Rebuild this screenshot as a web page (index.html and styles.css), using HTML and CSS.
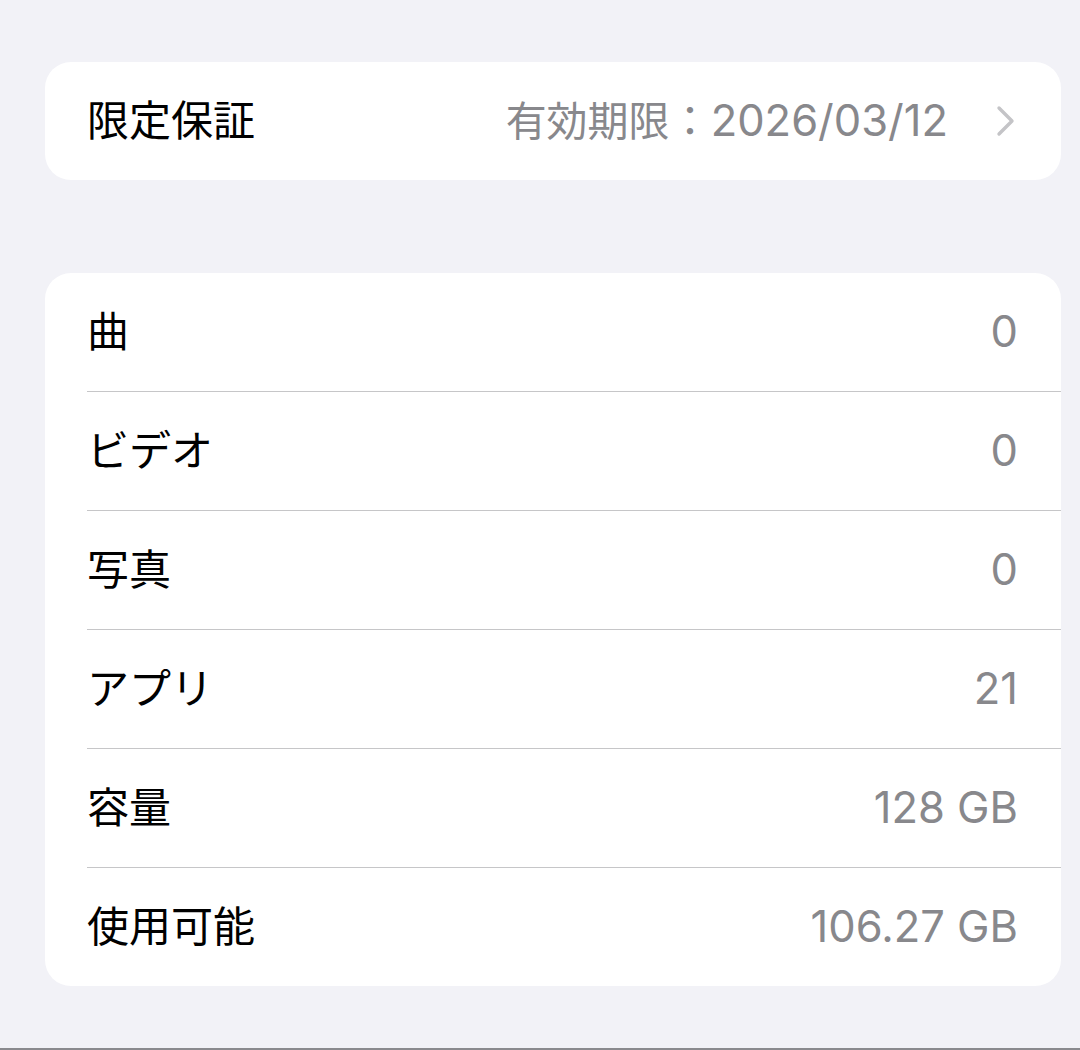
FILE: index.html
```html
<!DOCTYPE html>
<html lang="ja">
<head>
<meta charset="utf-8">
<link rel="stylesheet" href="styles.css">
</head>
<body>
<div class="page">
  <div class="card card-warranty">
    <div class="row">
      <span class="label">限定保証</span>
      <span class="value-wrap">
        <span class="value"><span class="cjk">有効期限：</span>2026/03/12</span>
        <svg class="chevron" width="20" height="32" viewBox="0 0 20 32"><path d="M3 3 L16 16 L3 29" fill="none" stroke="#c4c4c7" stroke-width="3.4" stroke-linecap="round" stroke-linejoin="round"/></svg>
      </span>
    </div>
  </div>
  <div class="card card-info">
    <div class="row"><span class="label">曲</span><span class="value">0</span></div>
    <div class="row"><span class="label">ビデオ</span><span class="value">0</span></div>
    <div class="row"><span class="label">写真</span><span class="value">0</span></div>
    <div class="row"><span class="label">アプリ</span><span class="value">21</span></div>
    <div class="row"><span class="label">容量</span><span class="value">128 GB</span></div>
    <div class="row"><span class="label">使用可能</span><span class="value">106.27 GB</span></div>
  </div>
</div>
</body>
</html>
```
FILE: styles.css
```css
* { box-sizing: border-box; }
html, body { margin: 0; padding: 0; }
body {
  background: #f2f2f7;
  font-family: Inter, "Noto Sans CJK JP", sans-serif;
}
.page {
  height: 1050px;
  padding: 62px 19px 0 45px;
  display: flex;
  flex-direction: column;
  gap: 93px;
  border-bottom: 2px solid #8a8a8e;
}
.card {
  background: #ffffff;
  border-radius: 26px;
  overflow: hidden;
}
.row {
  height: 118px;
  margin-left: 42px;
  padding-right: 43px;
  display: flex;
  align-items: center;
  justify-content: space-between;
  font-size: 42px;
  line-height: 1;
}
.card-info .row { height: 119px; }
.card-info .row:first-child { height: 118px; }
.card-info .row + .row { border-top: 1px solid #c6c6c8; }
.label { color: #000000; }
.value { color: #88888c; font-size: 43.5px; }
.value .cjk { font-size: 41px; }
.value-wrap {
  display: flex;
  align-items: center;
  gap: 48px;
}
.chevron { display: block; margin-right: 2px; }
```
